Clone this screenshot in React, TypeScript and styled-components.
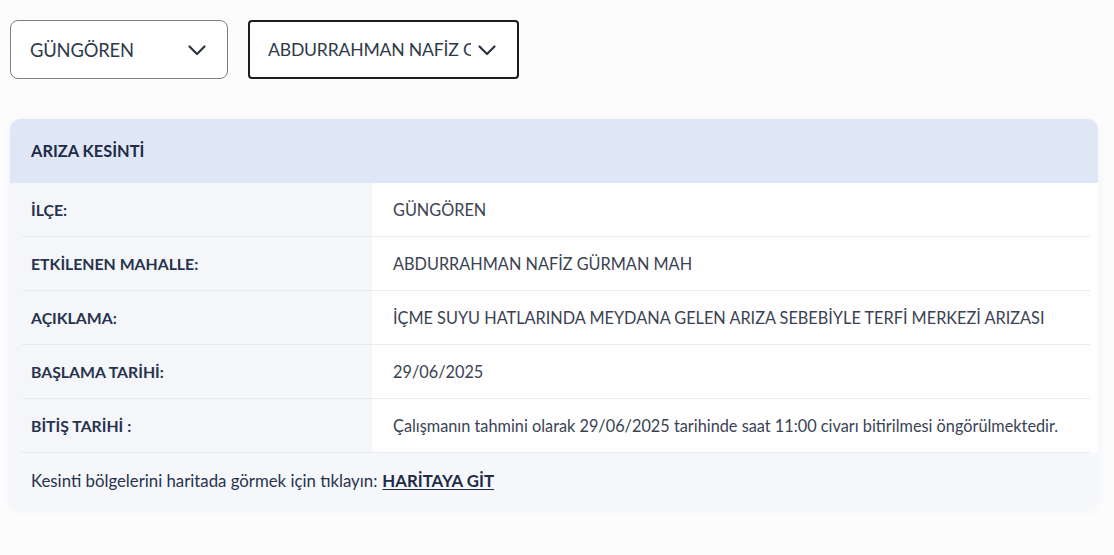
import React from "react";
import styled, { createGlobalStyle } from "styled-components";

const GlobalStyle = createGlobalStyle`
  html, body {
    margin: 0;
    padding: 0;
    background: #fcfcfd;
  }
  body {
    font-family: "Lato", "Open Sans", sans-serif;
    color: #2b3648;
  }
`;

const Page = styled.div`
  width: 1114px;
  height: 555px;
  box-sizing: border-box;
  padding: 20px 16px 0 10px;
  background: #fcfcfd;
`;

const Filters = styled.div`
  display: flex;
  gap: 20px;
`;

const Select = styled.div<{ $active?: boolean; $width: number }>`
  box-sizing: border-box;
  width: ${(p) => p.$width}px;
  height: 59px;
  display: flex;
  align-items: center;
  gap: ${(p) => (p.$active ? 6 : 4)}px;
  padding: 0 20px 0 ${(p) => (p.$active ? 18 : 19)}px;
  background: #ffffff;
  border: ${(p) => (p.$active ? "2px solid #1b1d22" : "1px solid #7b7f86")};
  border-radius: ${(p) => (p.$active ? 4 : 8)}px;
`;

const SelectText = styled.span<{ $size: number }>`
  flex: 1;
  min-width: 0;
  overflow: hidden;
  white-space: nowrap;
  font-size: ${(p) => p.$size}px;
  color: #2e3a4a;
  letter-spacing: -0.2px;
`;

const Chevron = () => (
  <svg width="20" height="20" viewBox="0 0 20 20" fill="none">
    <path
      d="M2.5 6.5l7.5 7.5 7.5-7.5"
      stroke="#2b3444"
      strokeWidth="2.2"
      strokeLinecap="round"
      strokeLinejoin="round"
    />
  </svg>
);

const Card = styled.section`
  margin-top: 40px;
  width: 1088px;
  border-radius: 11px;
  overflow: hidden;
  background: #f5f7fa;
  box-shadow: 0 2px 10px rgba(40, 60, 100, 0.06);
`;

const CardHeader = styled.div`
  height: 64px;
  display: flex;
  align-items: center;
  padding-left: 21px;
  padding-bottom: 2px;
  box-sizing: border-box;
  background: #dfe7f6;
  font-size: 16.4px;
  font-weight: 700;
  color: #1f2b48;
`;

const Row = styled.div`
  display: grid;
  grid-template-columns: 362px 1fr;
  height: 54px;
`;

const LabelCell = styled.div`
  background: #f4f6fa;
  display: flex;
`;

const Label = styled.div`
  flex: 1;
  display: flex;
  align-items: center;
  margin-left: 12px;
  padding-left: 9px;
  border-bottom: 1px solid #e6e9ee;
  font-size: 15.8px;
  font-weight: 700;
  color: #27334d;
`;

const ValueCell = styled.div`
  background: #fefefe;
  display: flex;
`;

const Value = styled.div`
  flex: 1;
  display: flex;
  align-items: center;
  padding-left: 21px;
  margin-right: 8px;
  border-bottom: 1px solid #e9ebef;
  font-size: 16.3px;
  color: #3a4353;
  white-space: nowrap;
`;

const Footer = styled.div`
  height: 55px;
  display: flex;
  align-items: center;
  padding-left: 21px;
  background: #f5f7fa;
  font-size: 16.8px;
  color: #27334d;
`;

const MapLink = styled.a`
  margin-left: 5px;
  font-weight: 700;
  color: #1f2b48;
  text-decoration: underline;
  text-underline-offset: 2px;
`;

const rows: [string, string][] = [
  ["İLÇE:", "GÜNGÖREN"],
  ["ETKİLENEN MAHALLE:", "ABDURRAHMAN NAFİZ GÜRMAN MAH"],
  ["AÇIKLAMA:", "İÇME SUYU HATLARINDA MEYDANA GELEN ARIZA SEBEBİYLE TERFİ MERKEZİ ARIZASI"],
  ["BAŞLAMA TARİHİ:", "29/06/2025"],
  [
    "BİTİŞ TARİHİ :",
    "Çalışmanın tahmini olarak 29/06/2025 tarihinde saat 11:00 civarı bitirilmesi öngörülmektedir.",
  ],
];

export default function App() {
  return (
    <>
      <GlobalStyle />
      <Page>
        <Filters>
          <Select $width={218}>
            <SelectText $size={18.4}>GÜNGÖREN</SelectText>
            <Chevron />
          </Select>
          <Select $active $width={271}>
            <SelectText $size={17.6}>ABDURRAHMAN NAFİZ GÜRMAN MAH</SelectText>
            <Chevron />
          </Select>
        </Filters>
        <Card>
          <CardHeader>ARIZA KESİNTİ</CardHeader>
          {rows.map(([k, v]) => (
            <Row key={k}>
              <LabelCell>
                <Label>{k}</Label>
              </LabelCell>
              <ValueCell>
                <Value>{v}</Value>
              </ValueCell>
            </Row>
          ))}
          <Footer>
            Kesinti bölgelerini haritada görmek için tıklayın:
            <MapLink href="#">HARİTAYA GİT</MapLink>
          </Footer>
        </Card>
      </Page>
    </>
  );
}
